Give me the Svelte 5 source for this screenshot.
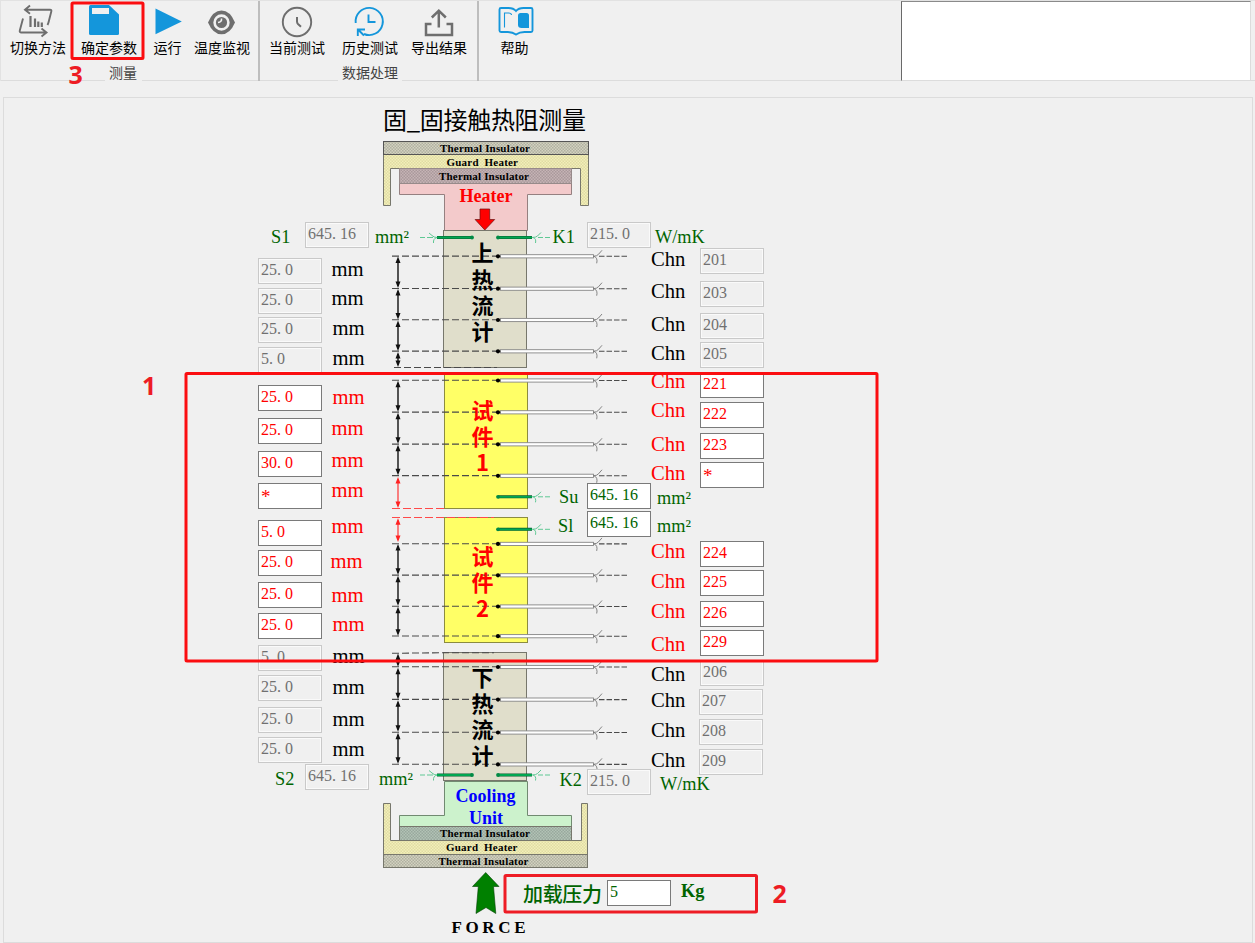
<script>
  const GREEN = '#006400';

  // lengths: [box top, value, label x, label baseline, editable]
  const lengths = [
    [258, '25.0', 332, 276, 0], [288, '25.0', 332, 305, 0], [317, '25.0', 333, 335, 0], [347, '5.0', 333, 365, 0],
    [385, '25.0', 333, 404, 1], [418, '25.0', 332, 435, 1], [451, '30.0', 332, 467, 1], [483, '*', 332, 497, 1],
    [520, '5.0', 332, 533, 1], [550, '25.0', 331, 568, 1], [582, '25.0', 332, 602, 1], [613, '25.0', 333, 631, 1],
    [645, '5.0', 333, 663, 0], [675, '25.0', 333, 694, 0], [707, '25.0', 333, 726, 0], [737, '25.0', 333, 756, 0]
  ];

  // channels: [box x, box top, value, label baseline, editable]
  const channels = [
    [700, 248, '201', 266, 0], [700, 281, '203', 298, 0], [700, 313, '204', 331, 0], [700, 342, '205', 360, 0],
    [700, 372, '221', 388, 1], [700, 402, '222', 417, 1], [700, 433, '223', 451, 1], [700, 462, '*', 480, 1],
    [700, 541, '224', 558, 1], [700, 570, '225', 588, 1], [700, 601, '226', 618, 1], [700, 630, '229', 651, 1],
    [700, 660, '206', 681, 0], [699, 689, '207', 707, 0], [699, 719, '208', 737, 0], [699, 749, '209', 767, 0]
  ];

  // constants: [box x, box top, value, editable]
  const constants = [
    [305, 222, '645.16', 0], [587, 222, '215.0', 0], [587, 483, '645.16', 1], [587, 511, '645.16', 1],
    [305, 764, '645.16', 0], [587, 769, '215.0', 0], [607, 880, '5', 1]
  ];

  const fields = [
    ...lengths.map(([y, v, , , on]) => ({ x: 258, y, v, on, color: on ? '#f00' : '#707070' })),
    ...channels.map(([x, y, v, , on]) => ({ x, y, v, on, color: on ? '#f00' : '#707070' })),
    ...constants.map(([x, y, v, on]) => ({ x, y, v, on, color: on ? GREEN : '#707070' }))
  ];

  const captions = [
    ['S1', 271, 243], ['mm²', 375, 243], ['K1', 552.5, 243], ['W/mK', 655, 243],
    ['Su', 559, 503], ['mm²', 657, 504], ['Sl', 558, 532], ['mm²', 657, 532],
    ['S2', 275, 785], ['mm²', 379, 785], ['K2', 559.5, 786], ['W/mK', 660, 790]
  ];

  const probes = [256.3, 288.7, 320, 351.3, 380.5, 412.3, 444.3, 475.8, 543.9, 575.3, 606.5, 636.2, 667, 699.6, 732.5, 764.4];

  const spans = [
    [256, 288.5], [288.5, 320], [320, 351.5], [351.5, 367.5],
    [380.3, 412.3], [412.3, 444.3], [444.3, 475.7],
    [543.5, 575.3], [575.3, 606.3], [606.3, 636.3],
    [653, 667.3], [667.3, 699.7], [699.7, 732.3], [732.3, 764.3]
  ];
  const redSpans = [[476.5, 508.5], [517.7, 542.5]];

  const columns = [
    { text: '上热流计', ys: [261, 288, 314, 340], color: '#000' },
    { text: '试件1', ys: [419, 445, 471], color: '#f00' },
    { text: '试件2', ys: [565, 591, 617], color: '#f00' },
    { text: '下热流计', ys: [686, 712, 738, 764], color: '#000' }
  ];

  const charX = (x, v) => [...v].map((_, i) => x + i * 8).join(' ');
</script>

{#snippet arrowSpan(a, b, color, w)}
  <path d="M398 {a + 3}V{b - 3}" stroke={color} stroke-width={w} />
  <path d="M398 {a + 0.5}l2.500 6.500h-5zM398 {b - 0.5}l2.500 -6.500h-5z" fill={color} />
{/snippet}

{#snippet greenRight(y)}
  <path d="M498 {y}H532" stroke="#085c30" stroke-width="3" />
  <path d="M498 {y}H532" stroke="#00a651" stroke-width="1.8" />
  <circle cx="498" cy={y} r="1.9" fill="#008a45" />
  <path d="M532 {y}q4 0 5.500 -1.500l3.500 -3.500M533 {y}q3.500 1 2.500 5.500M538 {y}h5m2 0h5" stroke="#5fc894" fill="none" />
{/snippet}

{#snippet greenLeft(y)}
  <path d="M437 {y}H472" stroke="#085c30" stroke-width="3" />
  <path d="M437 {y}H472" stroke="#00a651" stroke-width="1.8" />
  <circle cx="472" cy={y} r="1.900" fill="#008a45" />
  <path d="M437 {y}q-3 0 -5 -2l-3 -2.500M437 {y}q-4 1 -3.500 5.500M420 {y}h5m2 0h6" stroke="#5fc894" fill="none" />
{/snippet}

<div class="app">
  <header class="ribbon">
    <section class="group measure">
      <div class="tools">
        <button class="tool">
          <svg viewBox="20 4 36 34" width="36" height="34" fill="none" stroke="#6e6e6e" stroke-width="1.9">
            <path d="M30 5.500 25 9.700l5 4M25.500 9.700H50Q51.800 9.700 51.300 11.500L49 20.500q-.5 2.500-1.500 4.500M23 18.500l-3.200 12q-.5 2 1.500 2H46M41.500 28.500l5 4-5 4" />
            <path d="M30.500 16v11M35 18.500V27M38.300 21.500V27M41.800 22.500V27" stroke-width="2.200" />
          </svg>
          <span>切换方法</span>
        </button>
        <button class="tool">
          <svg viewBox="91 4 36 34" width="36" height="34">
            <path d="M89 6.500Q89 5 90.500 5H109l10 9.500V33.500Q119 35 117.500 35H90.500Q89 35 89 33.500z" fill="#1496db" />
            <path d="M92 8h17v6H92z" fill="#f0f0f0" />
          </svg>
          <span>确定参数</span>
        </button>
        <button class="tool">
          <svg viewBox="149.500 4 36 34" width="36" height="34"><path d="M155 8.500 181.300 21.500 155 34.300z" fill="#1496db" /></svg>
          <span>运行</span>
        </button>
        <button class="tool">
          <svg viewBox="204 4 36 34" width="36" height="34">
            <path d="M208 22.500Q213 10.500 221.500 10.500T235 22.500Q230 34.300 221.500 34.300T208 22.500z" fill="#6e6e6e" />
            <circle cx="221.500" cy="22.500" r="6.900" fill="none" stroke="#f0f0f0" stroke-width="2.600" />
            <path d="M221.500 18.500q.5 3.500-3.500 4" fill="none" stroke="#f0f0f0" stroke-width="1.600" />
          </svg>
          <span>温度监视</span>
        </button>
      </div>
      <div class="name">测量</div>
    </section>
    <section class="group data">
      <div class="tools">
        <button class="tool">
          <svg viewBox="279 4 36 34" width="36" height="34" fill="none" stroke="#6e6e6e" stroke-width="1.900">
            <circle cx="297" cy="22" r="14.200" /><path d="M297 17v4.500q0 1.500 1 2.500l3 2.700" stroke-width="2" />
          </svg>
          <span>当前测试</span>
        </button>
        <button class="tool">
          <svg viewBox="352 4 36 34" width="36" height="34" fill="none" stroke="#1496db" stroke-width="1.900">
            <path d="M355.700 23A13.600 13.600 0 1 1 364 34M357.800 36V29.500H365M358 29.500l6 6M368.500 14.500v7.500H375.500" />
          </svg>
          <span>历史测试</span>
        </button>
        <button class="tool">
          <svg viewBox="421 4 36 34" width="36" height="34" fill="none" stroke="#6e6e6e" stroke-width="2.500">
            <path d="M431.500 24H426V35H452V24H446.500M438.800 27.500V11M431.800 17.500l7-6.800 7 6.800" />
          </svg>
          <span>导出结果</span>
        </button>
      </div>
      <div class="name">数据处理</div>
    </section>
    <section class="group help">
      <div class="tools">
        <button class="tool">
          <svg viewBox="496.500 4 36 34" width="36" height="34" fill="none" stroke="#1496db" stroke-width="1.900">
            <path d="M515.500 11Q513 8 508 8H500.500Q499 8 499 9.500V30.500Q499 32 500.500 32H507Q512 32 515.500 34.500Q519 32 524 32H530.500Q532 32 532 30.500V9.500Q532 8 530.500 8H523Q518 8 515.500 11z" />
            <path d="M504 27.500V13h4q3 0 3 2" stroke-width="1.100" />
            <path d="M520 13h6q2.500 0 2.500 2.500V28h-7.500q-3.500 0-3.500-3V15.500q0-2.500 2.500-2.500z" fill="#1496db" stroke="none" />
          </svg>
          <span>帮助</span>
        </button>
      </div>
    </section>
    <div class="log"></div>
  </header>

  <main class="panel">
    <svg class="diagram" viewBox="4 98 1248 844" width="1248" height="844">
      <defs>
        <pattern id="ins" width="3" height="3" patternUnits="userSpaceOnUse">
          <rect width="3" height="3" fill="#d3d2c0" /><path d="M0 0h1.500v1.500h-1.500zM1.500 1.500h1.500v1.500h-1.500z" fill="#b0b0a0" />
        </pattern>
        <pattern id="insHot" width="3" height="3" patternUnits="userSpaceOnUse">
          <rect width="3" height="3" fill="#c6b3b5" /><path d="M0 0h1.500v1.500h-1.500zM1.500 1.500h1.500v1.500h-1.500z" fill="#a9999b" />
        </pattern>
        <pattern id="insCold" width="3" height="3" patternUnits="userSpaceOnUse">
          <rect width="3" height="3" fill="#b2c3b5" /><path d="M0 0h1.500v1.500h-1.500zM1.500 1.500h1.500v1.500h-1.500z" fill="#98a89d" />
        </pattern>
        <pattern id="guard" width="3" height="3" patternUnits="userSpaceOnUse">
          <rect width="3" height="3" fill="#f2efb9" /><path d="M0 0h1.500v1.500h-1.500zM1.500 1.500h1.500v1.500h-1.500z" fill="#e0dca4" />
        </pattern>
      </defs>

      <text class="title" x="383" y="129" textLength="203">固_固接触热阻测量</text>

      <g stroke="#77776c" stroke-width="1">
        <path d="M383.500 154.500h205v51h-8v-37h-190v37h-7z" fill="url(#guard)" />
        <rect x="383.500" y="141.500" width="205" height="13" fill="url(#ins)" stroke="#555" />
        <path d="M399.500 183.500h172v11h-44v36h-83v-36h-45z" fill="#f3cacb" stroke="#958080" />
        <rect x="399.500" y="168.500" width="172" height="15" fill="url(#insHot)" stroke="#978a8a" />
        <rect x="443.500" y="230.500" width="83" height="137" fill="#e0decb" />
        <rect x="444.500" y="373.500" width="83" height="135" fill="#ffff66" stroke="#8c8c40" />
        <rect x="444.500" y="517.500" width="83" height="125" fill="#ffff66" stroke="#8c8c40" />
        <rect x="443.500" y="652.500" width="83" height="128" fill="#e0decb" />
        <path d="M444.500 781.500h83v34h44v11h-172v-11h45z" fill="#ccf2cc" stroke="#718a71" />
        <path d="M383.500 803.500h7v37h191v-37h6v51h-204z" fill="url(#guard)" />
        <rect x="399.500" y="826.500" width="172" height="14" fill="url(#insCold)" />
        <rect x="383.500" y="854.500" width="204" height="13" fill="url(#ins)" />
      </g>

      <g class="layer">
        <text x="440" y="152" textLength="90">Thermal Insulator</text>
        <text x="446.500" y="165.500" textLength="71.500">Guard&nbsp; Heater</text>
        <text x="439" y="180" textLength="90">Thermal Insulator</text>
        <text x="440" y="836.500" textLength="90">Thermal Insulator</text>
        <text x="446" y="850.500" textLength="71.500">Guard&nbsp; Heater</text>
        <text x="438.500" y="865" textLength="90">Thermal Insulator</text>
      </g>
      <g class="unit">
        <text x="459.500" y="202" fill="#f00">Heater</text>
        <text x="455.500" y="802" fill="#00f">Cooling</text>
        <text x="469" y="824" fill="#00f">Unit</text>
      </g>
      <path d="M480 209h9.700v10.500h5l-9.900 10.500-9.700-10.500h4.900z" fill="#f00" stroke="#6b1010" stroke-width=".7" />
      <path d="M485.700 872.500 499 886.500H493.500L495.800 913.500 486 907.500 476 913.500 478.300 886.500H472.500z" fill="#008000" stroke="#034003" stroke-width=".6" />

      <g stroke="#4a4a4a" stroke-width="1.100" stroke-dasharray="7 3" fill="none">
        {#each probes as y}<path d="M392 {y - 0.2}H497" />{/each}
        <path d="M394 367.500H497M392 653.300 443 652.700H494" />
      </g>
      <path d="M392 508.500H444M392 517.500H494" stroke="#ff4a4a" stroke-dasharray="8 3" />

      {#each spans as [a, b]}{@render arrowSpan(a, b, '#111', 1.4)}{/each}
      {#each redSpans as [a, b]}{@render arrowSpan(a, b, '#f22', 1.1)}{/each}

      {#each probes as y}
        <rect x="500.500" y={y - 1.6} width="93" height="3.200" fill="#fff" stroke="#858585" stroke-width=".9" />
        <path d="M593 {y}q4 0 5.500 -2l3.500 -4M594 {y}q4 1.500 2.700 7" fill="none" stroke="#777" stroke-width=".9" />
        <path d="M599 {y}H627" stroke="#4a4a4a" stroke-width="1.100" stroke-dasharray="5.500 2" />
        <circle cx="498" cy={y} r="2.100" fill="#000" />
      {/each}

      {@render greenLeft(237.5)}
      {@render greenRight(237.5)}
      {@render greenRight(496.8)}
      {@render greenRight(529.3)}
      {@render greenLeft(775)}
      {@render greenRight(775)}

      {#each columns as c}
        <text class="column" x={[...c.text].map(() => 482.5).join(' ')} y={c.ys.join(' ')} fill={c.color}>{c.text}</text>
      {/each}

      {#each lengths as [, , x, y, on]}<text class="tag" x={x - 0.5} {y} fill={on ? '#f00' : '#000'}>mm</text>{/each}
      {#each channels as [, , , y, on]}<text class="tag" x="651" {y} fill={on ? '#f00' : '#000'}>Chn</text>{/each}
      {#each captions as [t, x, y]}<text class="caption" {x} {y}>{t}</text>{/each}

      {#each fields as f}
        <rect x={f.x + 0.5} y={f.y + 0.5} width="63" height="25" fill={f.on ? '#fff' : '#f0f0f0'} stroke={f.on ? '#7a7a7a' : '#c9c9c9'} />
        {#if !f.on}<rect x={f.x + 1.5} y={f.y + 1.5} width="61" height="23" fill="none" stroke="#fafafa" />{/if}
        <text class="value" class:star={f.v === '*'} x={charX(f.x + 3, f.v)} y={f.v === '*' ? f.y + 20 : f.y + 17} fill={f.color}>{f.v}</text>
      {/each}

      <text class="load" x="523" y="901.500" textLength="79">加载压力</text>
      <text class="caption strong" x="681" y="897">Kg</text>
      <text class="force" x="451.500" y="932.500" textLength="74">FORCE</text>
    </svg>
  </main>

  <svg class="marks" viewBox="0 0 1255 943" width="1255" height="943">
    <g fill="none" stroke="#fb0d10" stroke-width="3">
      <rect x="72" y="3" width="71" height="55.500" rx="1" />
      <rect x="186" y="373.500" width="691" height="287.500" rx="1" />
      <rect x="505" y="875.500" width="251.500" height="36.500" rx="1" stroke="#ee1c25" />
    </g>
    <text x="142" y="394.500">1</text>
    <text x="772.500" y="903">2</text>
    <text x="68.500" y="83.500">3</text>
  </svg>
</div>

<style>
  :global(body) { background: #f0f0f0; overflow: hidden; }
  .app {
    position: relative;
    box-sizing: border-box;
    width: 1255px;
    height: 943px;
    display: flex;
    flex-direction: column;
    background: #f0f0f0;
    font-family: "Noto Sans CJK SC", sans-serif;
  }
  .ribbon {
    display: flex;
    box-sizing: border-box;
    height: 81px;
    margin-bottom: 16px;
    padding-right: 4px;
    border-top: 1px solid #e2e2e2;
    background: linear-gradient(#dcdcdc, #dcdcdc) bottom / 100% 1px no-repeat;
  }
  .group {
    box-sizing: border-box;
    display: flex;
    flex-direction: column;
    align-items: flex-start;
    border-right: 2px solid #bdbdbd;
  }
  .measure { width: 260px; padding-left: 1.5px; border-left: 1px solid #e2e2e2; }
  .data { width: 219px; }
  .help { flex: 1; border: 0; }
  .tools { display: grid; box-sizing: border-box; padding-top: 3px; height: 59px; }
  .measure .tools { grid-template-columns: 71px 71px 46px 63px; }
  .data .tools { grid-template-columns: 74px 72px 66px; }
  .help .tools { grid-template-columns: 71px; }
  .tool {
    display: flex;
    flex-direction: column;
    align-items: center;
    padding: 0;
    border: 0;
    background: none;
    color: #000;
    font: 14px/18px "Noto Sans CJK SC", sans-serif;
    white-space: nowrap;
  }
  .tool svg { display: block; flex: none; overflow: visible; }
  .name {
    box-sizing: border-box;
    width: 37px;
    padding-top: 2px;
    height: 21px;
    margin-left: 102px;
    background: #f0f0f0;
    color: #444;
    font-size: 14px;
    line-height: 20px;
    text-align: center;
  }
  .data .name { width: 64px; margin-left: 78px; }
  .log {
    box-sizing: border-box;
    width: 350px;
    height: 80px;
    border: 1px solid #dcdcdc;
    border-left: 1px solid #696969;
    border-top-color: #8a8a8a;
    background: #fff;
  }
  .panel {
    box-sizing: border-box;
    width: 1250px;
    height: 846px;
    margin-left: 3px;
    border: 1px solid #dcdcdc;
  }
  .diagram { display: block; }
  .title { font-size: 24px; }
  .layer { font: bold 11px "Liberation Serif", serif; }
  .unit { font: bold 18px "Liberation Serif", serif; }
  .column { font: bold 22px "Noto Sans CJK SC", sans-serif; text-anchor: middle; }
  .tag { font: 20.67px "Liberation Serif", serif; }
  .caption { font: 18.3px "Liberation Serif", serif; fill: #006400; }
  .strong { font-weight: bold; }
  .value { font: 16px "Liberation Serif", serif; }
  .star { font-size: 19px; }
  .load { font: 500 20px "Noto Sans CJK SC", sans-serif; fill: #006400; }
  .force { font: bold 17px "Liberation Serif", serif; }
  .marks { position: absolute; inset: 0; pointer-events: none; }
  .marks text { font: bold 25px "Open Sans", sans-serif; fill: #ed1c24; }
</style>
